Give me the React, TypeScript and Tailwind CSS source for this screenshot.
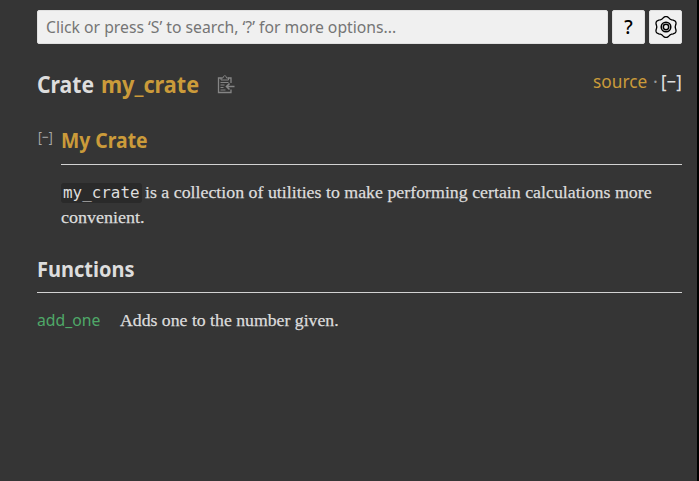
import type { ReactNode } from "react";

function Rule() {
  return <div className="h-px bg-[#d2d2d2]" />;
}

function ToolButton({ children, label }: { children: ReactNode; label: string }) {
  return (
    <button
      aria-label={label}
      className="flex h-[34px] w-[33px] shrink-0 items-center justify-center rounded-[2px] border border-[#e0e0e0] bg-[#f0f0f0] text-black"
    >
      {children}
    </button>
  );
}

// Six-lobed outline with lobes pointing straight up and down.
const gearOutline = Array.from({ length: 72 }, (_, i) => {
  const angle = (i * Math.PI) / 36;
  const radius = 9.6 + 0.9 * Math.cos(6 * angle);
  const x = 11 + radius * 1.06 * Math.sin(angle);
  const y = 11 - radius * Math.cos(angle);
  return `${x.toFixed(2)},${y.toFixed(2)}`;
}).join(" ");

function GearIcon() {
  return (
    <svg width="22" height="22" viewBox="0 0 22 22" fill="none" stroke="#000">
      <polygon points={gearOutline} strokeWidth="1.300" strokeLinejoin="round" />
      <circle cx="11" cy="11" r="4.800" strokeWidth="1.500" />
      <circle cx="11" cy="11" r="2.700" strokeWidth="1.500" />
    </svg>
  );
}

function ClipboardIcon() {
  return (
    <svg width="18" height="19" viewBox="0 0 18 19" fill="none" stroke="#858585">
      <path d="M4.500 3H1.500v14.500h12.500v-3M11 3h3v5" strokeWidth="1.300" />
      <path d="M4 5V3h2c0-3 3.500-3 3.500 0h2v2Z" strokeWidth="1" />
      <path d="M3.500 7.500h8M3.500 10h4M3.500 12.500h3M3.500 15h5" strokeWidth="1" />
      <path d="M17.500 11.500H9.500M12.500 8.500l-3 3 3 3" strokeWidth="1.600" />
    </svg>
  );
}

export default function App() {
  return (
    <div className="h-[481px] w-[699px] overflow-hidden border-r-2 border-black bg-[#353535] pl-[37px] pr-[15px] pt-[10px] font-['Noto_Sans','Open_Sans',sans-serif] text-[#ddd]">
      <div className="flex h-[34px] gap-1">
        <div className="flex w-[571px] items-center rounded-[2px] border border-[#e0e0e0] bg-[#f0f0f0] pl-2 pb-px">
          <span className="origin-left scale-x-[0.983] whitespace-nowrap text-[16px] text-[#757575]">
            Click or press ‘S’ to search, ‘?’ for more options...
          </span>
        </div>
        <ToolButton label="Help">
          <span className="text-[19px] font-medium leading-none">?</span>
        </ToolButton>
        <ToolButton label="Settings">
          <GearIcon />
        </ToolButton>
      </div>

      <header className="mt-[24px] flex h-[33px] justify-between whitespace-nowrap">
        <h1 className="flex text-[23px] font-bold leading-8">
          <span className="w-[64px]">
            <span className="inline-block origin-left scale-x-[0.92]">Crate</span>
          </span>
          <span className="w-[116px] text-[#cb9b3a]">
            <span className="inline-block origin-left scale-x-[0.942]">my_crate</span>
          </span>
          <span className="mt-[7px]">
            <ClipboardIcon />
          </span>
        </h1>
        <div className="flex text-[18px] leading-[26px]">
          <span className="w-[60px] text-[#cb9b3a]">
            <span className="inline-block origin-left scale-x-[0.96]">source</span>
          </span>
          <span className="w-[8px] text-[#999]">·</span>
          <span className="w-[21px] font-medium">
            <span className="inline-block origin-left scale-x-[0.93]">[−]</span>
          </span>
        </div>
      </header>

      <section className="mt-[23px] flex">
        <span className="w-[24px] pl-px pt-[3px] text-[14px] leading-5 text-[#aaa]">
          <span className="inline-block origin-left scale-x-[0.85]">[−]</span>
        </span>
        <div className="flex-1">
          <h2 className="h-[40px] text-[22px] font-bold leading-[30px] text-[#cb9b3a]">
            <span className="inline-block origin-left scale-x-[0.88]">My Crate</span>
          </h2>
          <Rule />
          <div className="mt-[15px] whitespace-nowrap font-['Liberation_Serif',serif] text-[17.5px] leading-6 [-webkit-text-stroke:0.25px_#ddd]">
            <p className="flex">
              <code className="mr-[3px] mt-[3px] flex h-[20px] w-[81px] items-center rounded-[3px] bg-[#2a2a2a] pl-[2px] font-['DejaVu_Sans_Mono',monospace] text-[15px] [-webkit-text-stroke:0]">
                <span className="origin-left scale-x-[1.06]">my_crate</span>
              </code>
              <span className="origin-left scale-x-[1.02]">
                is a collection of utilities to make performing certain calculations more
              </span>
            </p>
            <p className="mt-px">
              <span className="inline-block origin-left scale-x-[1.03]">convenient.</span>
            </p>
          </div>
        </div>
      </section>

      <section className="mt-[24px]">
        <h2 className="h-[39px] text-[22px] font-bold leading-[30px]">
          <span className="inline-block origin-left scale-x-[0.91]">Functions</span>
        </h2>
        <Rule />
        <div className="mt-4 flex">
          <span className="w-[83px] text-[16px] leading-[22px] text-[#4fa868]">
            <span className="inline-block origin-left scale-x-[0.985]">add_one</span>
          </span>
          <span className="font-['Liberation_Serif',serif] text-[17.5px] leading-[22px] [-webkit-text-stroke:0.25px_#ddd]">
            <span className="inline-block origin-left scale-x-[1.013]">Adds one to the number given.</span>
          </span>
        </div>
      </section>
    </div>
  );
}
